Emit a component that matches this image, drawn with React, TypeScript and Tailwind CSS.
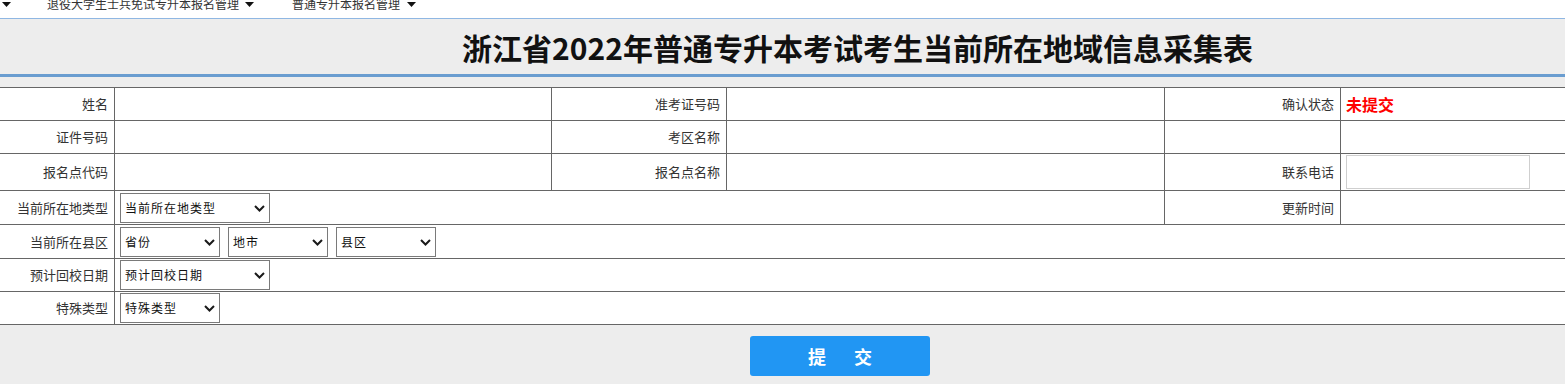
import React from "react";

const Caret = () => (
  <svg width="9" height="5" viewBox="0 0 9 5" className="shrink-0">
    <path d="M0 0 L9 0 L4.5 5 Z" fill="#111" />
  </svg>
);

const Chevron = () => (
  <svg width="11" height="7" viewBox="0 0 11 7">
    <polyline points="1,1 5.5,5.5 10,1" fill="none" stroke="#1a1a1a" strokeWidth="2" />
  </svg>
);

function Select({ label, width }: { label: string; width: string }) {
  return (
    <div className={`relative h-[30px] ${width}`}>
      <select className="appearance-none w-full h-full border border-[#7a7a7a] bg-white pl-[4px] text-[12px] tracking-[1px] text-[#111] outline-none">
        <option>{label}</option>
      </select>
      <span className="pointer-events-none absolute right-[5px] top-[12px]">
        <Chevron />
      </span>
    </div>
  );
}

const label = "border border-[#666] text-right pr-[6px] text-[13px] text-[#333]";
const cell = "border border-[#666] pl-[5px]";

export default function App() {
  return (
    <div className="w-[1565px] h-[384px] overflow-hidden bg-[#ededed] font-['Noto_Sans_CJK_SC',sans-serif]">
      {/* NAV */}
      <div className="h-[19px] bg-white border-b border-[#8fb7e3] overflow-hidden">
        <div className="flex items-center h-[12px] -mt-[2px] text-[12px] leading-[12px] text-[#333]">
          <span className="ml-[2px]"><Caret /></span>
          <span className="ml-[36px]">退役大学生士兵免试专升本报名管理</span>
          <span className="ml-[6px]"><Caret /></span>
          <span className="ml-[38px]">普通专升本报名管理</span>
          <span className="ml-[7px]"><Caret /></span>
        </div>
      </div>

      {/* TITLE */}
      <div className="h-[58px] flex items-center justify-center pl-[150px] border-b-[3px] border-[#6a9dd0]">
        <h1 className="text-[30px] font-bold text-[#111] leading-none">
          浙江省2022年普通专升本考试考生当前所在地域信息采集表
        </h1>
      </div>

      <div className="h-[10px]" />

      {/* FORM TABLE */}
      <table className="w-[1566px] table-fixed border-collapse bg-white -ml-px">
        <colgroup>
          <col className="w-[115px]" />
          <col className="w-[437px]" />
          <col className="w-[175px]" />
          <col className="w-[438px]" />
          <col className="w-[176px]" />
          <col className="w-[225px]" />
        </colgroup>
        <tbody>
          <tr className="h-[33px]">
            <td className={label}>姓名</td>
            <td className={cell}></td>
            <td className={label}>准考证号码</td>
            <td className={cell}></td>
            <td className={label}>确认状态</td>
            <td className={`${cell} text-[16px] font-bold text-[#ff0000]`}>未提交</td>
          </tr>
          <tr className="h-[33px]">
            <td className={label}>证件号码</td>
            <td className={cell}></td>
            <td className={label}>考区名称</td>
            <td className={cell}></td>
            <td className={cell}></td>
            <td className={cell}></td>
          </tr>
          <tr className="h-[37px]">
            <td className={label}>报名点代码</td>
            <td className={cell}></td>
            <td className={label}>报名点名称</td>
            <td className={cell}></td>
            <td className={label}>联系电话</td>
            <td className={cell}>
              <input className="w-[184px] h-[34px] border border-[#cfcfcf] bg-white outline-none block" />
            </td>
          </tr>
          <tr className="h-[34px]">
            <td className={label}>当前所在地类型</td>
            <td className={cell} colSpan={3}>
              <Select label="当前所在地类型" width="w-[150px]" />
            </td>
            <td className={label}>更新时间</td>
            <td className={cell}></td>
          </tr>
          <tr className="h-[34px]">
            <td className={label}>当前所在县区</td>
            <td className={cell} colSpan={5}>
              <div className="flex gap-[8px]">
                <Select label="省份" width="w-[100px]" />
                <Select label="地市" width="w-[100px]" />
                <Select label="县区" width="w-[100px]" />
              </div>
            </td>
          </tr>
          <tr className="h-[33px]">
            <td className={label}>预计回校日期</td>
            <td className={cell} colSpan={5}>
              <Select label="预计回校日期" width="w-[150px]" />
            </td>
          </tr>
          <tr className="h-[33px]">
            <td className={label}>特殊类型</td>
            <td className={cell} colSpan={5}>
              <Select label="特殊类型" width="w-[100px]" />
            </td>
          </tr>
        </tbody>
      </table>

      {/* SUBMIT */}
      <div className="flex justify-center pl-[115px] pt-[11px]">
        <button className="w-[180px] h-[40px] rounded-[3px] bg-[#2196f3] text-white text-[18px] font-bold flex items-center justify-center gap-[28px]">
          <span>提</span>
          <span>交</span>
        </button>
      </div>
    </div>
  );
}
